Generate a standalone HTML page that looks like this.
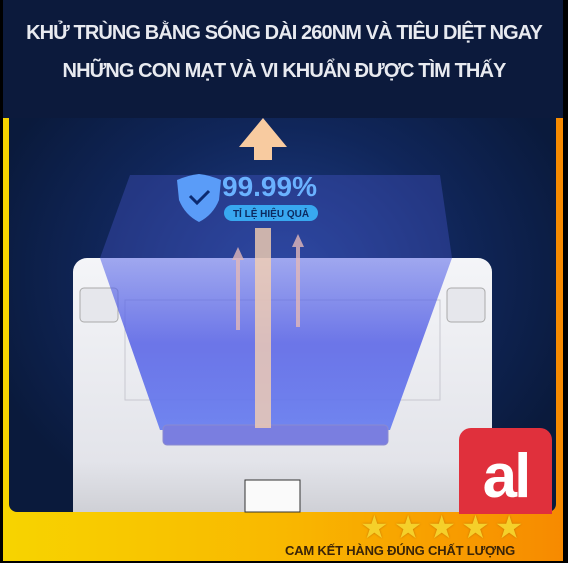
<!DOCTYPE html>
<html><head><meta charset="utf-8"><style>
*{margin:0;padding:0;box-sizing:border-box}
body{width:568px;height:563px;background:#000;position:relative;overflow:hidden;font-family:"Liberation Sans",sans-serif}
.top{position:absolute;left:3px;top:0;width:560px;height:130px;background:#0c1a3c}
.frame{position:absolute;left:3px;top:118px;width:560px;height:443px;background:linear-gradient(90deg,#f7d400 0%,#f9b800 50%,#f78a00 100%)}
.panel{position:absolute;left:9px;top:118px;width:547px;height:394px;background:radial-gradient(ellipse at 50% 40%,#1f3f8a 0%,#10265a 45%,#0a1a3c 80%);border-radius:0 0 8px 8px}
.t{position:absolute;left:0;width:568px;text-align:center;color:#e8eaf0;font-weight:bold;font-size:20px;letter-spacing:-0.9px;white-space:nowrap}
.dev{position:absolute;left:73px;top:258px;width:419px;height:254px;background:linear-gradient(#f4f5f8,#e3e4ea 80%,#cfd0d6);border-radius:14px 14px 0 0}
.beam{position:absolute;left:0;top:0;width:568px;height:563px}
.badge{position:absolute;left:459px;top:428px;width:93px;height:86px;background:#e0303c;border-radius:12px 12px 0 0;color:#fff;font-weight:bold;font-size:62px;line-height:86px;text-align:center;letter-spacing:-3px;padding-top:6px}
.stars{position:absolute;left:360px;top:508px;color:#f5d02a;font-size:32px;letter-spacing:5px;text-shadow:0 0 2px #c07000}
.cam{position:absolute;left:285px;top:543px;font-size:13px;font-weight:bold;color:#3a2408;letter-spacing:-0.2px;white-space:nowrap}
</style></head><body>
<div class="top"></div>
<div class="frame"></div>
<div class="panel"></div>
<div class="t" style="top:22px">KHỬ TRÙNG BẰNG SÓNG DÀI 260NM VÀ TIÊU DIỆT NGAY</div>
<div class="t" style="top:60px">NHỮNG CON MẠT VÀ VI KHUẨN ĐƯỢC TÌM THẤY</div>
<div class="dev"></div>
<svg class="beam" viewBox="0 0 568 563">
<defs><linearGradient id="b" x1="0" y1="0" x2="0" y2="1"><stop offset="0" stop-color="#5a68e8" stop-opacity=".55"/><stop offset=".5" stop-color="#5560e6" stop-opacity=".85"/><stop offset="1" stop-color="#6a80f0" stop-opacity=".95"/></linearGradient></defs>
<rect x="80" y="288" width="38" height="34" rx="4" fill="#e6e7ec" stroke="#aaa"/>
<rect x="447" y="288" width="38" height="34" rx="4" fill="#e6e7ec" stroke="#aaa"/>
<rect x="125" y="300" width="315" height="100" fill="none" stroke="#c8c8d0"/>
<path d="M100 258 L452 258 L390 430 L160 430 Z" fill="url(#b)"/>
<path d="M130 175 L440 175 L452 258 L100 258 Z" fill="#4a5ad0" opacity=".35"/>
<rect x="163" y="425" width="225" height="20" rx="4" fill="#7a7ee0" stroke="#8a8ad0"/>
<rect x="245" y="480" width="55" height="32" fill="#fafafa" stroke="#333"/>
<rect x="255" y="228" width="16" height="200" fill="#f5cfb0" opacity=".8"/>
<path d="M239 147 L263 118 L287 147 L272 147 L272 160 L254 160 L254 147 Z" fill="#f8cba0"/>
<path d="M232 260 L238 247 L244 260 Z M236 260 h4 v70 h-4 Z" fill="#e2b8b8" opacity=".8"/>
<path d="M292 247 L298 234 L304 247 Z M296 247 h4 v80 h-4 Z" fill="#e2b8b8" opacity=".8"/>
<path d="M177 180 Q189 175 199 174 Q209 175 221 180 L219 200 Q213 215 199 222 Q185 215 179 200 Z" fill="#5a9cf8"/>
<path d="M190 196 l7 7 l12 -12" stroke="#0c2a70" stroke-width="3" fill="none"/>
<text x="222" y="196" font-family="Liberation Sans" font-weight="bold" font-size="28" fill="#6ab2ff">99.99%</text>
<rect x="224" y="205" width="94" height="16" rx="8" fill="#38a8f0"/>
<text x="271" y="217" text-anchor="middle" font-family="Liberation Sans" font-weight="bold" font-size="10" fill="#0c2a60">TỈ LỆ HIỆU QUẢ</text>
</svg>
<div class="badge">al</div>
<div class="stars">★★★★★</div>
<div class="cam">CAM KẾT HÀNG ĐÚNG CHẤT LƯỢNG</div>
</body></html>
